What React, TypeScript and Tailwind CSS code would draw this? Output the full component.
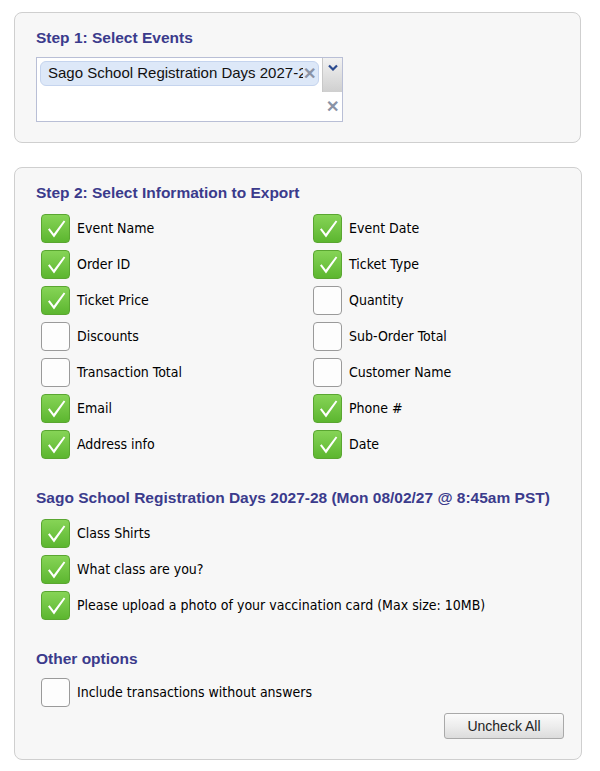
import React from "react";

const Check = ({ checked }: { checked: boolean }) =>
  checked ? (
    <div className="w-[29px] h-[29px] rounded-[4px] border border-[#5aa631] bg-gradient-to-b from-[#86d456] to-[#5cb62f] flex items-center justify-center shrink-0">
      <svg width="27" height="27" viewBox="0 0 27 27">
        <path d="M6 14.5 L7.6 13.2 L11.8 18.8 L21.8 5.5 L23.3 6.6 L12 22.5 Z" fill="white" />
      </svg>
    </div>
  ) : (
    <div className="w-[29px] h-[29px] rounded-[4px] border border-[#9a9a9a] bg-[#fdfdfd] shrink-0" />
  );

const Row = ({ checked, label }: { checked: boolean; label: string }) => (
  <div className="flex items-center h-[29px] gap-[7px]">
    <Check checked={checked} />
    <span className="text-[14px] text-[#000] whitespace-nowrap" style={{ fontFamily: "'DejaVu Sans Condensed', 'DejaVu Sans', sans-serif" }}>
      {label}
    </span>
  </div>
);

const heading = "font-bold text-[15.5px] leading-[18px] text-[#3b3b8c]";

export default function App() {
  const left: [boolean, string][] = [
    [true, "Event Name"],
    [true, "Order ID"],
    [true, "Ticket Price"],
    [false, "Discounts"],
    [false, "Transaction Total"],
    [true, "Email"],
    [true, "Address info"],
  ];
  const right: [boolean, string][] = [
    [true, "Event Date"],
    [true, "Ticket Type"],
    [false, "Quantity"],
    [false, "Sub-Order Total"],
    [false, "Customer Name"],
    [true, "Phone #"],
    [true, "Date"],
  ];
  return (
    <div className="bg-white w-[600px] h-[771px] pt-[12px] pl-[14px]" style={{ fontFamily: "'Liberation Sans', Arial, sans-serif" }}>
      <div className="w-[567px] h-[131px] bg-[#f7f7f7] border border-[#cfcfcf] rounded-[8px] pl-[21px] pt-[16px]">
        <div className={heading}>Step 1: Select Events</div>
        <div className="mt-[10px] w-[307px] h-[65px] border border-[#b9bfd6] bg-white flex">
          <div className="flex-1 pl-[3px] pt-[3px]">
            <div className="h-[25px] w-[279px] rounded-[6px] bg-[#dde8f8] border border-[#c5d4ee] flex items-center">
              <span className="pl-[7px] w-[262px] overflow-hidden text-[15px] text-[#111] whitespace-nowrap">Sago School Registration Days 2027-28</span>
              <span className="text-[#8a93a6] text-[16px] font-bold leading-[21px]">✕</span>
            </div>
          </div>
          <div className="w-[20px] flex flex-col items-center">
            <div className="w-[20px] h-[34px] bg-gradient-to-b from-[#f2f2f2] to-[#cfcfcf] border-l border-[#c8c8c8] flex justify-center pt-[6px]">
              <svg width="10" height="7" viewBox="0 0 10 7">
                <path d="M1 1.5 L5 5.5 L9 1.5" stroke="#2b4a8f" strokeWidth="2.2" fill="none" />
              </svg>
            </div>
            <span className="mt-[6px] text-[#8a93a6] text-[16px] font-bold leading-[18px]">✕</span>
          </div>
        </div>
      </div>

      <div className="mt-[24px] w-[568px] h-[593px] bg-[#f7f7f7] border border-[#cfcfcf] rounded-[8px] pl-[21px] pt-[16px]">
        <div className={heading}>Step 2: Select Information to Export</div>
        <div className="mt-[12px] ml-[5px] grid grid-cols-[272px_1fr] gap-y-[7px]">
          {left.map((l, i) => (
            <React.Fragment key={i}>
              <Row checked={l[0]} label={l[1]} />
              <Row checked={right[i][0]} label={right[i][1]} />
            </React.Fragment>
          ))}
        </div>
        <div className={heading + " mt-[30px]"}>Sago School Registration Days 2027-28 (Mon 08/02/27 @ 8:45am PST)</div>
        <div className="mt-[12px] ml-[5px] flex flex-col gap-[7px]">
          <Row checked label="Class Shirts" />
          <Row checked label="What class are you?" />
          <Row checked label="Please upload a photo of your vaccination card (Max size: 10MB)" />
        </div>
        <div className={heading + " mt-[30px]"}>Other options</div>
        <div className="mt-[10px] ml-[5px]">
          <Row checked={false} label="Include transactions without answers" />
        </div>
        <div className="flex justify-end pr-[17px] mt-[6px]">
          <button className="w-[120px] h-[26px] rounded-[3px] border border-[#a9a9a9] bg-gradient-to-b from-[#fbfbfb] via-[#ededed] to-[#dcdcdc] text-[14px] text-[#222]">
            Uncheck All
          </button>
        </div>
      </div>
    </div>
  );
}
